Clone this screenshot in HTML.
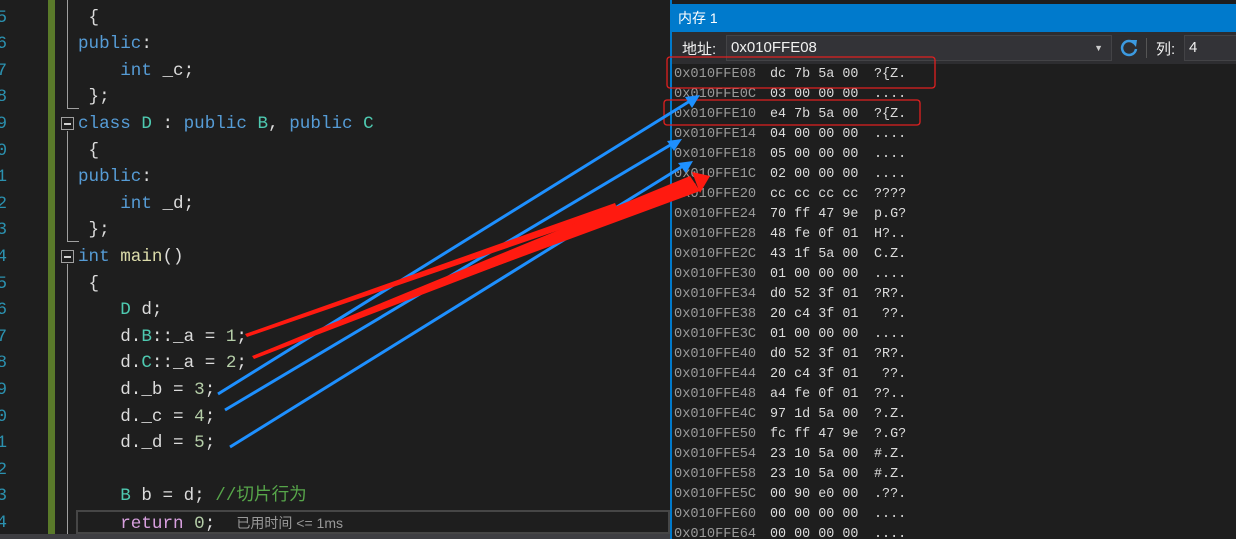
<!DOCTYPE html>
<html><head><meta charset="utf-8"><style>
html,body{margin:0;width:1236px;height:539px;overflow:hidden}
body{background:#1e1e1e;position:relative;font-family:"Liberation Mono",monospace}
.ln{position:absolute;left:-14px;color:#2b91af;font-size:17.6px;line-height:26.6px;top:4.7px;white-space:pre}
.code{position:absolute;left:78px;top:4.7px;color:#dcdcdc;font-size:17.6px;line-height:26.6px;white-space:pre;font-family:"Liberation Mono","Noto Sans CJK SC",monospace}
.k{color:#569cd6}.t{color:#4ec9b0}.n{color:#b5cea8}.c{color:#57a64a}.f{color:#dcdcaa}.r{color:#d8a0df}
.bar{position:absolute;left:48px;top:0;width:7px;height:534px;background:#5a7a2a}
.box{position:absolute;width:11px;height:11px;border:1px solid #a0a0a0;background:#1e1e1e}
.box:after{content:"";position:absolute;left:2px;top:5px;width:7px;height:1.5px;background:#d0d0d0}
.vl{position:absolute;width:1px;background:#a0a0a0}
.mem{position:absolute;left:670px;top:0;width:566px;height:539px;background:#1e1e1e;border-left:2px solid #007acc;overflow:hidden}
.title{position:absolute;left:0;top:4px;width:566px;height:28px;background:#007acc;color:#fff;font-family:"Liberation Sans","Noto Sans CJK SC",sans-serif;font-size:14px;line-height:28px;text-indent:6px}
.tool{position:absolute;left:0;top:32px;width:566px;height:32px;background:#2d2d30;font-family:"Liberation Sans","Noto Sans CJK SC",sans-serif;color:#f1f1f1;font-size:15px}
.rows{position:absolute;left:2px;top:65px;font-size:13.4px;line-height:20px;color:#dcdcdc}
.rows div{height:20px;white-space:pre}
.rows span{display:inline-block}
.rows .a{color:#9a9a9a;width:96px;font-size:13.7px}
.rows .h{width:104px}
</style></head><body>
<div class="bar"></div>
<div class="ln">05
06
07
08
09
10
11
12
13
14
15
16
17
18
19
20
21
22
23
24</div>
<div class="vl" style="left:67px;top:0;height:109px"></div>
<div class="vl" style="left:67px;top:108px;width:12px;height:1px"></div>
<div class="box" style="left:61px;top:117px"></div>
<div class="vl" style="left:67px;top:131px;height:111px"></div>
<div class="vl" style="left:67px;top:241px;width:12px;height:1px"></div>
<div class="box" style="left:61px;top:250px"></div>
<div class="vl" style="left:67px;top:264px;height:270px"></div>
<div style="position:absolute;left:76px;top:510px;width:594px;height:24px;border:2px solid #464646;box-sizing:border-box"></div>
<div class="code"> {
<span class="k">public</span>:
    <span class="k">int</span> _c;
 };
<span class="k">class</span> <span class="t">D</span> : <span class="k">public</span> <span class="t">B</span>, <span class="k">public</span> <span class="t">C</span>
 {
<span class="k">public</span>:
    <span class="k">int</span> _d;
 };
<span class="k">int</span> <span class="f">main</span>()
 {
    <span class="t">D</span> d;
    d.<span class="t">B</span>::_a = <span class="n">1</span>;
    d.<span class="t">C</span>::_a = <span class="n">2</span>;
    d._b = <span class="n">3</span>;
    d._c = <span class="n">4</span>;
    d._d = <span class="n">5</span>;

    <span class="t">B</span> b = d; <span class="c">//切片行为</span>
    <span class="r">return</span> <span class="n">0</span>;  <span style="font-family:'Liberation Sans','Noto Sans CJK SC',sans-serif;font-size:14px;color:#999">已用时间 &lt;= 1ms</span></div>
<div style="position:absolute;left:0;top:534px;width:670px;height:5px;background:#3e3e42"></div>
<div class="mem">
<div class="title">内存 1</div>
<div class="tool">
<span style="position:absolute;left:10px;top:6px">地址:</span>
<div style="position:absolute;left:54px;top:3px;width:384px;height:24px;background:#333337;border:1px solid #434346;line-height:24px;text-indent:4px">0x010FFE08<span style="position:absolute;right:8px;top:0;font-size:9px;color:#ccc">▼</span></div>
<svg style="position:absolute;left:446px;top:5px" width="22" height="22" viewBox="0 0 22 22"><path d="M16 6 A7 7 0 1 0 18 12" fill="none" stroke="#3c9ae0" stroke-width="2.5"/><polygon points="12,3 19,3 18,10" fill="#3c9ae0"/></svg>
<div style="position:absolute;left:474px;top:6px;width:1px;height:20px;background:#555"></div>
<span style="position:absolute;left:484px;top:6px">列:</span>
<div style="position:absolute;left:512px;top:3px;width:60px;height:24px;background:#333337;border:1px solid #434346;line-height:24px;text-indent:4px">4</div>
</div>
<div class="rows"><div><span class="a">0x010FFE08</span><span class="h">dc 7b 5a 00</span>?{Z.</div><div><span class="a">0x010FFE0C</span><span class="h">03 00 00 00</span>....</div><div><span class="a">0x010FFE10</span><span class="h">e4 7b 5a 00</span>?{Z.</div><div><span class="a">0x010FFE14</span><span class="h">04 00 00 00</span>....</div><div><span class="a">0x010FFE18</span><span class="h">05 00 00 00</span>....</div><div><span class="a">0x010FFE1C</span><span class="h">02 00 00 00</span>....</div><div><span class="a">0x010FFE20</span><span class="h">cc cc cc cc</span>????</div><div><span class="a">0x010FFE24</span><span class="h">70 ff 47 9e</span>p.G?</div><div><span class="a">0x010FFE28</span><span class="h">48 fe 0f 01</span>H?..</div><div><span class="a">0x010FFE2C</span><span class="h">43 1f 5a 00</span>C.Z.</div><div><span class="a">0x010FFE30</span><span class="h">01 00 00 00</span>....</div><div><span class="a">0x010FFE34</span><span class="h">d0 52 3f 01</span>?R?.</div><div><span class="a">0x010FFE38</span><span class="h">20 c4 3f 01</span> ??.</div><div><span class="a">0x010FFE3C</span><span class="h">01 00 00 00</span>....</div><div><span class="a">0x010FFE40</span><span class="h">d0 52 3f 01</span>?R?.</div><div><span class="a">0x010FFE44</span><span class="h">20 c4 3f 01</span> ??.</div><div><span class="a">0x010FFE48</span><span class="h">a4 fe 0f 01</span>??..</div><div><span class="a">0x010FFE4C</span><span class="h">97 1d 5a 00</span>?.Z.</div><div><span class="a">0x010FFE50</span><span class="h">fc ff 47 9e</span>?.G?</div><div><span class="a">0x010FFE54</span><span class="h">23 10 5a 00</span>#.Z.</div><div><span class="a">0x010FFE58</span><span class="h">23 10 5a 00</span>#.Z.</div><div><span class="a">0x010FFE5C</span><span class="h">00 90 e0 00</span>.??.</div><div><span class="a">0x010FFE60</span><span class="h">00 00 00 00</span>....</div><div><span class="a">0x010FFE64</span><span class="h">00 00 00 00</span>....</div></div>
</div>
<svg style="position:absolute;left:0;top:0" width="1236" height="539">
<rect x="667" y="57" width="268" height="31" rx="3" fill="none" stroke="#e02020" stroke-width="1.3"/>
<rect x="664" y="100" width="256" height="25" rx="3" fill="none" stroke="#e02020" stroke-width="1.3"/>
<g stroke="#1e90ff" stroke-width="3" fill="#1e90ff">
<line x1="218" y1="394" x2="690" y2="101"/>
<line x1="225" y1="410" x2="672" y2="144"/>
<line x1="230" y1="447" x2="683" y2="166"/>
</g>
<g fill="#1e90ff">
<polygon points="700,95 685,97 692,108"/>
<polygon points="682,139 667,141 674,151"/>
<polygon points="693,161 678,163 686,173"/>
</g>
<g fill="#ff1a10">
<polygon points="245,334 615,203 618,210 247,337"/>
<polygon points="252,356 695,183 698,189 254,359"/>
<polygon points="250,357 690,176 700,191"/>
<polygon points="710,176 692,172 700,193"/>
</g>
</svg>
</body></html>
